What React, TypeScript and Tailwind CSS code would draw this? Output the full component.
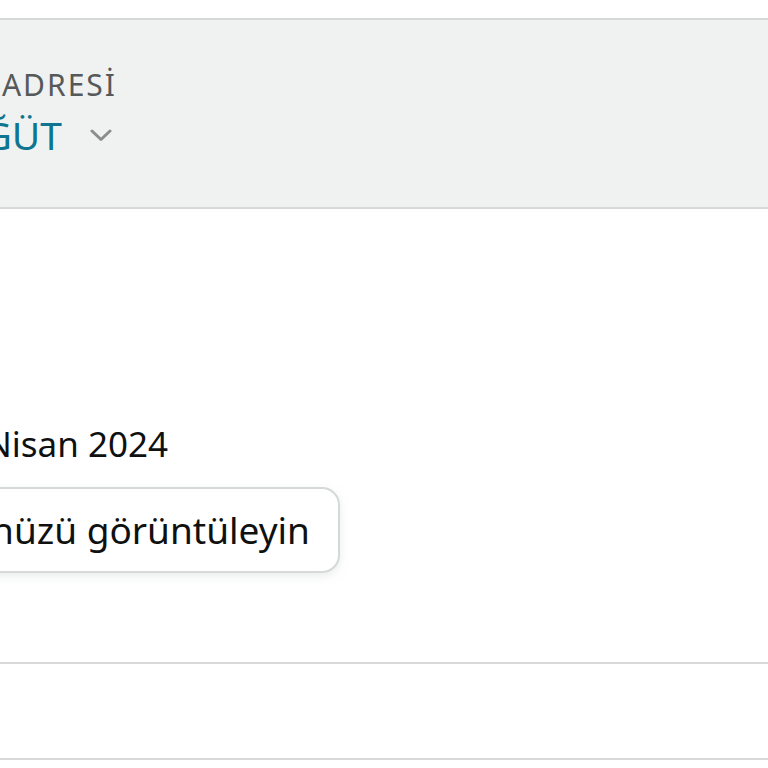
export default function App() {
  return (
    <div className="w-[768px] h-[768px] overflow-hidden bg-white font-['Noto_Sans','Open_Sans',sans-serif]">
      <div className="mt-[18px] h-[191px] border-y-2 border-[#d5d9d9] bg-[#f0f2f2] pt-[50px]">
        <div className="w-[117px] flex justify-end whitespace-nowrap text-[30px] leading-none tracking-[2px] text-[#565959]">
          GÖNDERİM ADRESİ
        </div>
        <div className="mt-[15px] flex items-center">
          <div className="w-[62px] flex justify-end whitespace-nowrap text-[39px] leading-none text-[#0f7590]">
            SÖĞÜT
          </div>
          <svg className="ml-[28px] mt-[1px]" width="22" height="13" viewBox="0 0 22 13" fill="none">
            <polyline points="2,2 11,10.5 20,2" stroke="#8a8d8d" strokeWidth="3" strokeLinecap="round" strokeLinejoin="round" />
          </svg>
        </div>
      </div>

      <div className="pt-[217px]">
        <div className="w-[168px] flex justify-end whitespace-nowrap text-[35px] leading-none text-[#0f1111]">
          Teslim edildi 29 Nisan 2024
        </div>
        <div className="mt-[26px] w-[340px] flex justify-end">
          <button className="shrink-0 h-[86px] whitespace-nowrap rounded-[18px] border-2 border-[#d5d9d9] bg-white px-[28px] text-[37px] text-[#0f1111] shadow-[0_3px_8px_rgba(213,217,217,0.5)]">
            Ürününüzü görüntüleyin
          </button>
        </div>
      </div>

      <div className="mt-[89px] border-t-2 border-[#d8dada]" />
      <div className="mt-[94px] border-t-2 border-[#d8dada]" />
    </div>
  )
}
